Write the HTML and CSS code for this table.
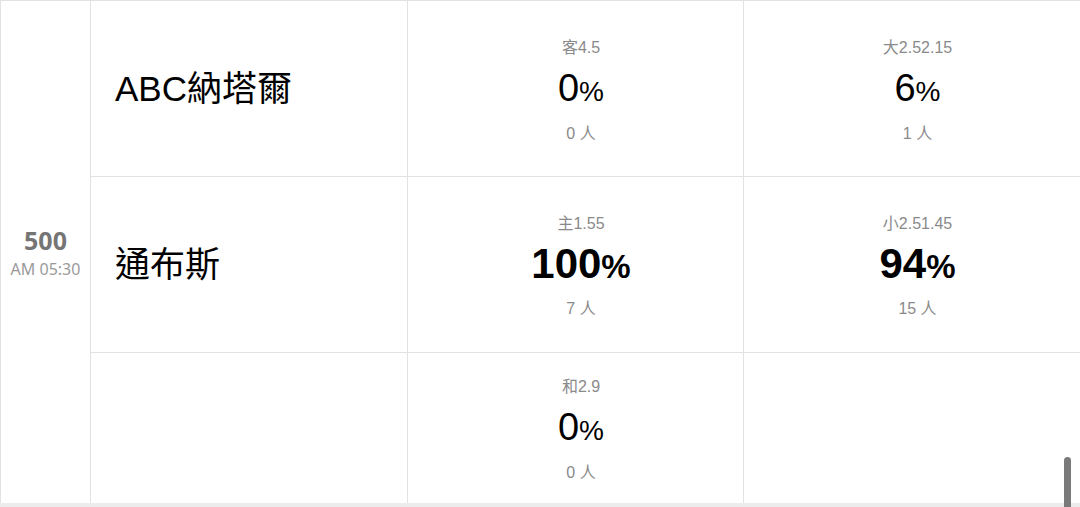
FILE: index.html
```html
<!DOCTYPE html>
<html lang="zh-Hant">
<head>
<meta charset="utf-8">
<link rel="stylesheet" href="styles.css">
</head>
<body>
<div class="page">
  <div class="match">
    <div class="time">
      <div class="time-code">500</div>
      <div class="time-clock">AM 05:30</div>
    </div>
    <div class="rows">
      <div class="row">
        <div class="team">ABC納塔爾</div>
        <div class="bet">
          <div class="bet-label">客4.5</div>
          <div class="bet-pct">0<span class="pct">%</span></div>
          <div class="bet-count">0 人</div>
        </div>
        <div class="bet">
          <div class="bet-label">大2.52.15</div>
          <div class="bet-pct">6<span class="pct">%</span></div>
          <div class="bet-count">1 人</div>
        </div>
      </div>
      <div class="row">
        <div class="team">通布斯</div>
        <div class="bet">
          <div class="bet-label">主1.55</div>
          <div class="bet-pct is-top">100<span class="pct">%</span></div>
          <div class="bet-count">7 人</div>
        </div>
        <div class="bet">
          <div class="bet-label">小2.51.45</div>
          <div class="bet-pct is-top">94<span class="pct">%</span></div>
          <div class="bet-count">15 人</div>
        </div>
      </div>
      <div class="row row-last">
        <div class="team"></div>
        <div class="bet">
          <div class="bet-label">和2.9</div>
          <div class="bet-pct">0<span class="pct">%</span></div>
          <div class="bet-count">0 人</div>
        </div>
        <div class="bet"></div>
      </div>
    </div>
  </div>
  <div class="footer-band"></div>
  <div class="scroll-thumb"></div>
</div>
</body>
</html>
```

FILE: styles.css
```css
html, body {
  margin: 0;
  padding: 0;
  background: #ffffff;
  height: 507px;
  overflow: hidden;
}

body {
  font-family: "Liberation Sans", "Noto Sans CJK TC", sans-serif;
  color: #000;
}

.page {
  position: relative;
  width: 1080px;
  height: 507px;
  overflow: hidden;
}

.match {
  display: flex;
  border-top: 1px solid #e2e2e2;
  border-left: 1px solid #e2e2e2;
}

.time {
  width: 89px;
  border-right: 1px solid #e2e2e2;
  display: flex;
  flex-direction: column;
  align-items: center;
  justify-content: center;
  padding-top: 3px;
}

.time-code {
  font-family: "Noto Sans", "Liberation Sans", sans-serif;
  font-size: 25px;
  font-weight: 700;
  color: #757575;
  line-height: 28px;
}

.time-clock {
  font-family: "Noto Sans", "Liberation Sans", sans-serif;
  font-size: 16px;
  color: #9a9a9a;
  line-height: 24px;
  margin-top: 3px;
}

.rows {
  flex: 1;
  display: flex;
  flex-direction: column;
}

.row {
  display: grid;
  grid-template-columns: 317px 336px 1fr;
  height: 175px;
  border-bottom: 1px solid #e2e2e2;
}

.row-last {
  height: 150px;
  border-bottom: none;
}

.team {
  border-right: 1px solid #e2e2e2;
  display: flex;
  align-items: center;
  padding-left: 24px;
  font-size: 35px;
  line-height: 40px;
}

.bet {
  border-right: 1px solid #e2e2e2;
  display: flex;
  flex-direction: column;
  align-items: center;
  justify-content: center;
  padding-left: 11px;
  padding-top: 4px;
}

.row-last .bet {
  padding-top: 4px;
  padding-bottom: 0;
}

.bet:last-child {
  border-right: none;
}

.bet-label {
  font-size: 16px;
  color: #8a8a8a;
  line-height: 20px;
}

.bet-pct {
  font-size: 38px;
  line-height: 48px;
  margin-top: 6px;
  margin-bottom: 6px;
}

.bet-pct.is-top {
  font-weight: 700;
  font-size: 42px;
}

.pct {
  font-size: 28px;
}

.is-top .pct {
  font-size: 33px;
}

.bet-count {
  font-size: 16px;
  color: #8a8a8a;
  line-height: 20px;
  margin-top: 2px;
}

.footer-band {
  height: 6px;
  background: #ececec;
}

.scroll-thumb {
  position: absolute;
  right: 9px;
  top: 457px;
  width: 7px;
  height: 60px;
  border-radius: 4px;
  background: #7a7a7a;
}
```
